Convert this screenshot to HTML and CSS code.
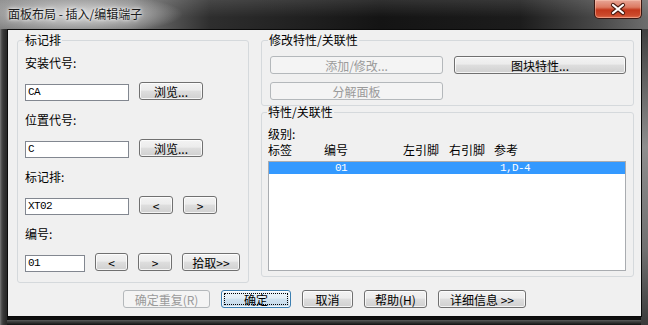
FILE: index.html
```html
<!DOCTYPE html>
<html lang="zh-CN">
<head>
<meta charset="utf-8">
<title>面板布局 - 插入/编辑端子</title>
<link rel="stylesheet" href="styles.css">
</head>
<body>
<div class="window">
  <div class="titlebar">
    <span class="title">面板布局 - 插入/编辑端子</span>
    <div class="close">
      <svg width="46" height="18" viewBox="0 0 46 18">
        <path d="M18 5 L28 13 M28 5 L18 13" stroke="#4a1a10" stroke-width="4.2" stroke-linecap="round" fill="none"/>
        <path d="M18 5 L28 13 M28 5 L18 13" stroke="#ffffff" stroke-width="2.2" stroke-linecap="round" fill="none"/>
      </svg>
    </div>
  </div>
  <div class="frame">
    <div class="client">
      <div class="main">
        <fieldset class="group left">
          <legend>标记排</legend>
          <div class="label">安装代号:</div>
          <div class="row">
            <div class="input w104">CA</div>
            <button class="btn w64">浏览...</button>
          </div>
          <div class="label">位置代号:</div>
          <div class="row">
            <div class="input w104">C</div>
            <button class="btn w64">浏览...</button>
          </div>
          <div class="label">标记排:</div>
          <div class="row">
            <div class="input w104">XT02</div>
            <button class="btn w34">&lt;</button>
            <button class="btn w34">&gt;</button>
          </div>
          <div class="label">编号:</div>
          <div class="row">
            <div class="input w60">01</div>
            <button class="btn w33">&lt;</button>
            <button class="btn w34">&gt;</button>
            <button class="btn w58">拾取&gt;&gt;</button>
          </div>
        </fieldset>
        <div class="right">
          <fieldset class="group g1">
            <legend>修改特性/关联性</legend>
            <div class="btn-grid">
              <button class="btn" disabled>添加/修改...</button>
              <button class="btn">图块特性...</button>
              <button class="btn" disabled>分解面板</button>
            </div>
          </fieldset>
          <fieldset class="group g2">
            <legend>特性/关联性</legend>
            <div class="label tight">级别:</div>
            <div class="cols header">
              <span class="c1">标签</span><span class="c2">编号</span><span class="c3">左引脚</span><span class="c4">右引脚</span><span class="c5">参考</span>
            </div>
            <div class="list">
              <div class="cols item selected">
                <span class="c1"></span><span class="c2 mono pad2">01</span><span class="c3"></span><span class="c4"></span><span class="c5 mono pad5">1,D-4</span>
              </div>
            </div>
          </fieldset>
        </div>
      </div>
      <div class="footer">
        <button class="btn f87" disabled>确定重复(R)</button>
        <button class="btn f70 default">确定</button>
        <button class="btn f51">取消</button>
        <button class="btn f63">帮助(H)</button>
        <button class="btn f88">详细信息 &gt;&gt;</button>
      </div>
    </div>
  </div>
</div>
</body>
</html>
```

FILE: styles.css
```css
* { box-sizing: border-box; }

body {
  margin: 0;
  width: 648px;
  height: 325px;
  overflow: hidden;
  font-family: "Noto Sans CJK SC", "Noto Sans", sans-serif;
  font-size: 12px;
  color: #000;
}

.window {
  width: 648px;
  height: 325px;
  display: flex;
  flex-direction: column;
  background: #1c1c1c;
}

.titlebar {
  height: 29px;
  flex: none;
  display: flex;
  justify-content: space-between;
  align-items: flex-start;
  background:
    radial-gradient(ellipse 105px 20px at 78px 14px, rgba(225,225,225,0.95) 0%, rgba(190,190,190,0.7) 55%, rgba(120,120,120,0) 100%),
    linear-gradient(180deg, rgba(255,255,255,0.12), rgba(255,255,255,0) 60%),
    linear-gradient(90deg, #858585 0px, #7a7a7a 130px, #2e2e2e 210px, #141414 380px, #1c1c1c 520px, #4a4a4a 600px, #6e6e6e 648px);
}

.title {
  margin: 7px 0 0 8px;
  line-height: 14px;
  font-size: 12px;
  color: #1a1a1a;
  text-shadow: 0 0 5px #f4f4f4, 0 0 3px #ffffff;
  white-space: nowrap;
}

.close {
  margin-right: 6px;
  width: 48px;
  height: 19px;
  border: 1px solid #3a1712;
  border-top: 0;
  border-radius: 0 0 5px 5px;
  background: linear-gradient(180deg, #e8a697 0%, #dc7a62 40%, #c3381c 55%, #cc4a2c 85%, #e07050 100%);
  box-shadow: inset 0 0 0 1px rgba(255,210,190,0.45);
  display: flex;
  align-items: center;
  justify-content: center;
}

.frame {
  flex: 1;
  display: flex;
  padding: 0 7px 8px 7px;
  background:
    linear-gradient(90deg, #808080 0px, #5a5a5a 1px, #3a3a3a 3px, #2a2a2a 6px, #2a2a2a 7px, rgba(0,0,0,0) 7px) left top / 7px 100% no-repeat,
    linear-gradient(180deg, #404040 0%, #8e8e8e 40%, #707070 75%, #3a3a3a 100%) right top / 7px 100% no-repeat,
    linear-gradient(180deg, rgba(0,0,0,0) 0, rgba(0,0,0,0) calc(100% - 8px), #0e0e0e calc(100% - 8px), #0e0e0e calc(100% - 5px), #5a5a5a calc(100% - 5px), #3a3a3a calc(100% - 3px), #111 100%),
    #1c1c1c;
}

.client {
  flex: 1;
  border: 1px solid #0a0a0a;
  background: #f0f0f0;
  display: flex;
  flex-direction: column;
}

.main {
  display: flex;
  align-items: flex-start;
  gap: 12px;
  padding: 4px 7px 0 9px;
}

fieldset.group {
  margin: 0;
  min-width: 0;
  border: 1px solid #d5d9dc;
  border-radius: 3px;
}

legend {
  padding: 0 1px;
  margin-left: -1px;
  font-size: 12px;
  line-height: 12px;
}

.left {
  width: 232px;
  flex: none;
  padding: 11px 7px 10px 7px;
}

.label {
  height: 12px;
  line-height: 12px;
  margin-bottom: 13px;
  white-space: nowrap;
}

.row {
  display: flex;
  align-items: flex-start;
  gap: 10px;
  height: 19px;
  margin-bottom: 13px;
}

.row:last-child { margin-bottom: 0; }

.input {
  height: 17px;
  margin-top: 2px;
  border: 1px solid #828790;
  background: #fff;
  font-family: "Liberation Mono", "DejaVu Sans Mono", monospace;
  font-size: 11px;
  letter-spacing: -0.6px;
  line-height: 15px;
  padding-left: 2px;
}

.w104 { width: 104px; }
.w60 { width: 60px; }
.w64 { width: 64px; }
.w34 { width: 34px; }
.w33 { width: 33px; }
.w58 { width: 58px; }

.btn {
  height: 18px;
  margin: 0;
  padding: 0;
  border: 1px solid #707070;
  border-radius: 3px;
  background: linear-gradient(180deg, #f3f3f3 0%, #ececec 45%, #dedede 50%, #d0d0d0 100%);
  box-shadow: inset 0 0 0 1px rgba(255,255,255,0.75);
  font-family: "Noto Sans CJK SC", "Noto Sans", sans-serif;
  font-size: 12px;
  line-height: 15px;
  color: #000;
  white-space: nowrap;
}

.btn:disabled {
  border-color: #b4b8bb;
  background: #f4f4f4;
  box-shadow: none;
  color: #9a9a9a;
}

.btn.default {
  border-color: #3c7fb1;
  background: linear-gradient(180deg, #eef5fa 0%, #e3eef6 45%, #d1e3f0 50%, #c4d9ea 100%);
  outline: 1px dotted #000;
  outline-offset: -4px;
}

.right {
  width: 373px;
  flex: none;
  display: flex;
  flex-direction: column;
}

.g1 {
  padding: 10px 7px 5px 8px;
}

.g1 legend { margin-left: -2px; }

.btn-grid {
  display: grid;
  grid-template-columns: 173px 172px;
  column-gap: 11px;
  row-gap: 8px;
}

.g2 {
  margin-top: 7px;
  padding: 10px 7px 5px 6px;
}

.label.tight { margin-bottom: 4px; }

.cols {
  display: flex;
  white-space: nowrap;
}

.header {
  height: 12px;
  line-height: 12px;
  margin-bottom: 5px;
}

.c1 { width: 56px; flex: none; }
.c2 { width: 79px; flex: none; }
.c3 { width: 46px; flex: none; }
.c4 { width: 45px; flex: none; }
.c5 { flex: 1; }

.list {
  height: 110px;
  border: 1px solid #a9acb0;
  background: #fff;
}

.item {
  height: 12px;
  line-height: 12px;
}

.item.selected {
  background: #3399ff;
  color: #fff;
}

.mono {
  font-family: "Liberation Mono", "DejaVu Sans Mono", monospace;
  font-size: 11px;
  letter-spacing: -0.6px;
}

.pad2 { padding-left: 10px; }
.pad5 { padding-left: 5px; }

.footer {
  margin-top: 7px;
  display: flex;
  justify-content: center;
  gap: 11px;
}

.f87 { width: 87px; }
.f70 { width: 70px; }
.f51 { width: 51px; }
.f63 { width: 63px; }
.f88 { width: 88px; }
```
